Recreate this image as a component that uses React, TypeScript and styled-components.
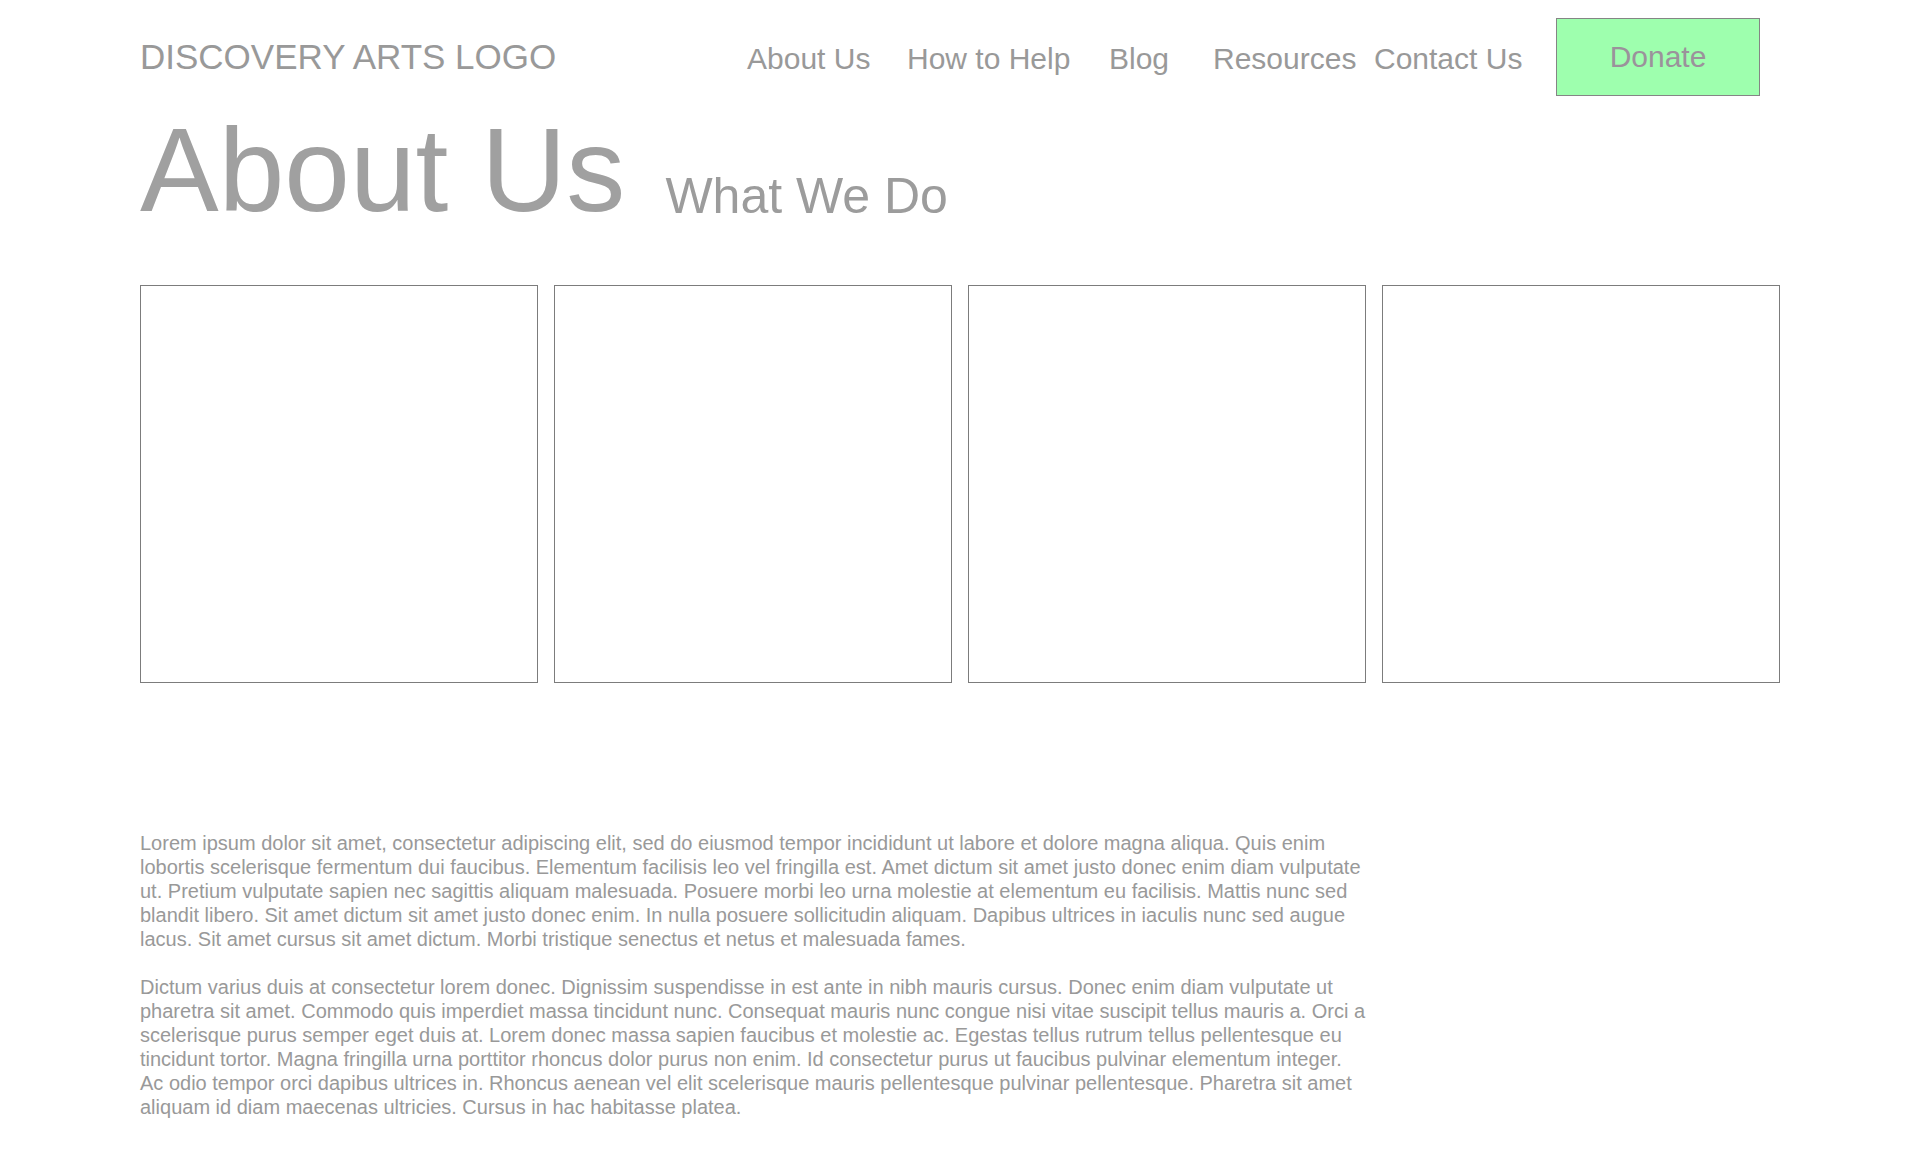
import React from 'react'
import styled, { createGlobalStyle } from 'styled-components'

const GlobalStyle = createGlobalStyle`
  body {
    margin: 0;
    background: #ffffff;
    font-family: "Liberation Sans", Arial, Helvetica, sans-serif;
    color: #999999;
  }
`

const Page = styled.div`
  padding: 0 140px 40px;
`

const Header = styled.header`
  display: flex;
  align-items: center;
  padding-top: 18px;
`

const Logo = styled.div`
  width: 607px;
  font-size: 35px;
  color: #999999;
  white-space: nowrap;
`

const Nav = styled.nav`
  display: grid;
  grid-template-columns: 160px 202px 104px 161px 182px auto;
  align-items: center;
`

const NavLink = styled.a`
  font-size: 30px;
  color: #999999;
  text-decoration: none;
  white-space: nowrap;
  padding-top: 3px;
`

const DonateButton = styled.button`
  width: 204px;
  height: 78px;
  background: #9effae;
  border: 1px solid #858585;
  font-family: inherit;
  font-size: 30px;
  color: #9b929b;
  padding: 0;
  cursor: pointer;
`

const TitleRow = styled.div`
  display: flex;
  align-items: baseline;
  gap: 40px;
  margin-top: 15px;
`

const Title = styled.h1`
  margin: 0;
  font-size: 118px;
  font-weight: 400;
  line-height: 1;
  color: #a0a0a0;
`

const Subtitle = styled.h2`
  margin: 0;
  font-size: 50px;
  font-weight: 400;
  line-height: 1;
  color: #9c9c9c;
  transform: translateY(2px);
`

const Gallery = styled.div`
  display: grid;
  grid-template-columns: repeat(4, 1fr);
  gap: 16px;
  margin-top: 56px;
`

const Tile = styled.div`
  aspect-ratio: 1 / 1;
  border: 1px solid #7c7c7c;
  background: #ffffff;
`

const Copy = styled.div`
  max-width: 1226px;
  margin-top: 148px;
`

const Paragraph = styled.p`
  margin: 0 0 24px;
  font-size: 20px;
  line-height: 24px;
  color: #999999;
`

const navItems = ['About Us', 'How to Help', 'Blog', 'Resources', 'Contact Us']

const paragraphs = [
  'Lorem ipsum dolor sit amet, consectetur adipiscing elit, sed do eiusmod tempor incididunt ut labore et dolore magna aliqua. Quis enim lobortis scelerisque fermentum dui faucibus. Elementum facilisis leo vel fringilla est. Amet dictum sit amet justo donec enim diam vulputate ut. Pretium vulputate sapien nec sagittis aliquam malesuada. Posuere morbi leo urna molestie at elementum eu facilisis. Mattis nunc sed blandit libero. Sit amet dictum sit amet justo donec enim. In nulla posuere sollicitudin aliquam. Dapibus ultrices in iaculis nunc sed augue lacus. Sit amet cursus sit amet dictum. Morbi tristique senectus et netus et malesuada fames.',
  'Dictum varius duis at consectetur lorem donec. Dignissim suspendisse in est ante in nibh mauris cursus. Donec enim diam vulputate ut pharetra sit amet. Commodo quis imperdiet massa tincidunt nunc. Consequat mauris nunc congue nisi vitae suscipit tellus mauris a. Orci a scelerisque purus semper eget duis at. Lorem donec massa sapien faucibus et molestie ac. Egestas tellus rutrum tellus pellentesque eu tincidunt tortor. Magna fringilla urna porttitor rhoncus dolor purus non enim. Id consectetur purus ut faucibus pulvinar elementum integer. Ac odio tempor orci dapibus ultrices in. Rhoncus aenean vel elit scelerisque mauris pellentesque pulvinar pellentesque. Pharetra sit amet aliquam id diam maecenas ultricies. Cursus in hac habitasse platea.',
]

const App = () => {
  return (
    <>
      <GlobalStyle />
      <Page>
        <Header>
          <Logo>DISCOVERY ARTS LOGO</Logo>
          <Nav>
            {navItems.map((item) => (
              <NavLink key={item} href="#">
                {item}
              </NavLink>
            ))}
            <DonateButton>Donate</DonateButton>
          </Nav>
        </Header>

        <TitleRow>
          <Title>About Us</Title>
          <Subtitle>What We Do</Subtitle>
        </TitleRow>

        <Gallery>
          {[0, 1, 2, 3].map((i) => (
            <Tile key={i} />
          ))}
        </Gallery>

        <Copy>
          {paragraphs.map((text, i) => (
            <Paragraph key={i}>{text}</Paragraph>
          ))}
        </Copy>
      </Page>
    </>
  )
}

export default App
